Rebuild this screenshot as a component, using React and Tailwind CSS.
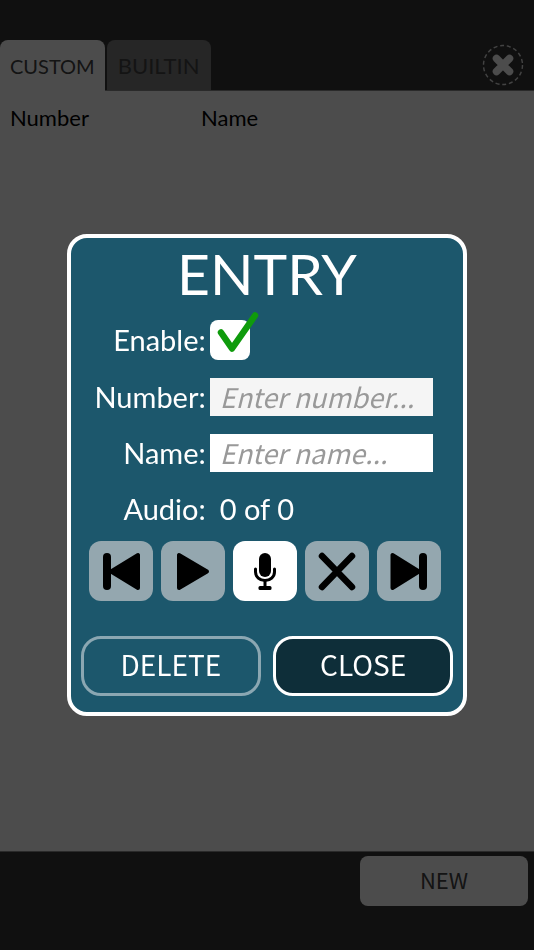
import { useState } from 'react';

const TABS = ['CUSTOM', 'BUILTIN'];

const PrevIcon = () => (
  <svg viewBox="0 0 64 60" className="h-full w-full" aria-hidden="true">
    <rect x="14" y="12" width="8" height="37" rx="4" />
    <path d="M22 30.5 49 14V47Z" stroke="currentColor" strokeWidth="4" strokeLinejoin="round" />
  </svg>
);

const PlayIcon = () => (
  <svg viewBox="0 0 64 60" className="h-full w-full" aria-hidden="true">
    <path d="M18 14V47L46 30.5Z" stroke="currentColor" strokeWidth="4" strokeLinejoin="round" />
  </svg>
);

const MicIcon = () => (
  <svg viewBox="0 0 64 60" className="h-full w-full" aria-hidden="true">
    <rect x="26" y="12" width="12" height="24" rx="6" />
    <path
      d="M22.5 28V31A9.5 8.5 0 0 0 41.5 31V28M32 40V46"
      fill="none"
      stroke="currentColor"
      strokeWidth="3"
      strokeLinecap="round"
    />
    <rect x="25.5" y="45" width="13" height="4" rx="1.5" />
  </svg>
);

const CrossIcon = () => (
  <svg viewBox="0 0 64 60" className="h-full w-full" aria-hidden="true">
    <path d="M17 15 47 46M47 15 17 46" stroke="currentColor" strokeWidth="6.5" strokeLinecap="round" />
  </svg>
);

const NextIcon = () => (
  <svg viewBox="0 0 64 60" className="h-full w-full" aria-hidden="true">
    <path d="M15.5 14V47L42 30.5Z" stroke="currentColor" strokeWidth="4" strokeLinejoin="round" />
    <rect x="42" y="12" width="8" height="37" rx="4" />
  </svg>
);

const AUDIO_ACTIONS = [
  { label: 'Previous', Icon: PrevIcon, enabled: false },
  { label: 'Play', Icon: PlayIcon, enabled: false },
  { label: 'Record', Icon: MicIcon, enabled: true },
  { label: 'Remove', Icon: CrossIcon, enabled: false },
  { label: 'Next', Icon: NextIcon, enabled: false },
];

const Header = () => (
  <header className="flex items-end justify-between border-b border-[#8c8c8c] bg-[#383838] pt-10 pr-2.5">
    <div className="flex gap-0.5">
      {TABS.map((tab, i) => (
        <button
          key={tab}
          className={
            i === 0
              ? '-mb-px h-[51px] rounded-t-lg bg-white px-2.5 text-xl text-[#444]'
              : 'h-[50px] min-w-[104px] rounded-t-lg bg-[#808080] px-2.5 text-[22px] text-[#444]'
          }
        >
          {tab}
        </button>
      ))}
    </div>
    <button className="mb-1 h-[42px] w-[42px]" aria-label="Close page">
      <svg viewBox="0 0 42 42" className="h-full w-full" fill="none" aria-hidden="true">
        <circle cx="21" cy="21" r="19.5" stroke="#e0e0e0" strokeWidth="1.4" strokeDasharray="4 2.8" />
        <path d="M14.5 14.5 27.5 27.5M27.5 14.5 14.5 27.5" stroke="#fff" strokeWidth="7.5" strokeLinecap="round" />
      </svg>
    </button>
  </header>
);

const EntryDialog = () => {
  const [enabled, setEnabled] = useState(true);
  const [number, setNumber] = useState('');
  const [name, setName] = useState('');

  const inputStyle =
    "h-[38px] w-full px-2.5 font-['Noto_Sans_CJK_SC',sans-serif] text-[27px] text-black placeholder:italic placeholder:text-[#999] outline-none";

  return (
    <div
      role="dialog"
      aria-labelledby="entry-title"
      className="w-3/4 rounded-[20px] border-4 border-white bg-[#1c576c] px-2.5 pb-4 text-white"
    >
      <h1 id="entry-title" className="pt-1 text-center text-[57px] leading-[62px]">
        ENTRY
      </h1>

      <div className="mt-4 mr-5 grid grid-cols-[125px_1fr] items-center gap-x-1 gap-y-[18px] text-[29px] leading-[38px]">
        <label htmlFor="enable" className="text-right">
          Enable:
        </label>
        <div className="relative h-10 w-10">
          <input
            id="enable"
            type="checkbox"
            checked={enabled}
            onChange={(e) => setEnabled(e.target.checked)}
            className="block h-10 w-10 appearance-none rounded-lg bg-white"
          />
          {enabled && (
            <svg
              viewBox="0 0 50 50"
              className="pointer-events-none absolute bottom-0 left-0 h-[50px] w-[50px]"
              fill="none"
              aria-hidden="true"
            >
              <path d="M11 22.5 22 38.5 45 5.5" stroke="#0f9b0c" strokeWidth="6.5" strokeLinecap="round" strokeLinejoin="round" />
            </svg>
          )}
        </div>

        <label htmlFor="number" className="text-right">
          Number:
        </label>
        <input
          id="number"
          type="text"
          value={number}
          onChange={(e) => setNumber(e.target.value)}
          placeholder="Enter number..."
          className={`${inputStyle} bg-[#f5f5f5]`}
        />

        <label htmlFor="name" className="text-right">
          Name:
        </label>
        <input
          id="name"
          type="text"
          value={name}
          onChange={(e) => setName(e.target.value)}
          placeholder="Enter name..."
          className={`${inputStyle} bg-white`}
        />

        <span className="text-right">Audio:</span>
        <span className="px-2.5">0 of 0</span>
      </div>

      <div className="mt-[13px] mr-1 flex justify-center gap-2">
        {AUDIO_ACTIONS.map(({ label, Icon, enabled: active }) => (
          <button
            key={label}
            aria-label={label}
            className={`h-[60px] w-16 rounded-xl text-black ${active ? 'bg-white' : 'bg-[#94a7af]'}`}
          >
            <Icon />
          </button>
        ))}
      </div>

      <div className="mt-[35px] grid grid-cols-2 gap-3 font-['Noto_Sans_CJK_SC',sans-serif] text-[28px] leading-9">
        <button className="h-[60px] rounded-[20px] border-3 border-[#8ba7b2] pb-1">DELETE</button>
        <button className="h-[60px] rounded-[20px] border-3 border-white bg-[#0e2e39] pb-1">CLOSE</button>
      </div>
    </div>
  );
};

export default function App() {
  return (
    <div className="flex min-h-screen flex-col bg-white font-['Lato',sans-serif] text-black">
      <Header />

      <main className="flex-1">
        <table className="w-full table-fixed text-left text-[22px]">
          <thead>
            <tr>
              <th className="w-[191px] px-2.5 py-2.5 font-normal">Number</th>
              <th className="px-2.5 py-2.5 font-normal">Name</th>
            </tr>
          </thead>
        </table>
      </main>

      <footer className="flex justify-end border-t border-[#8c8c8c] bg-[#383838] pt-1 pr-1.5 pb-11">
        <button className="h-[50px] w-[168px] rounded-lg bg-white pb-1 font-['Noto_Sans_CJK_SC',sans-serif] text-[22px] text-[#444]">
          NEW
        </button>
      </footer>

      <div className="fixed inset-0 flex items-center justify-center bg-black/70">
        <EntryDialog />
      </div>
    </div>
  );
}
